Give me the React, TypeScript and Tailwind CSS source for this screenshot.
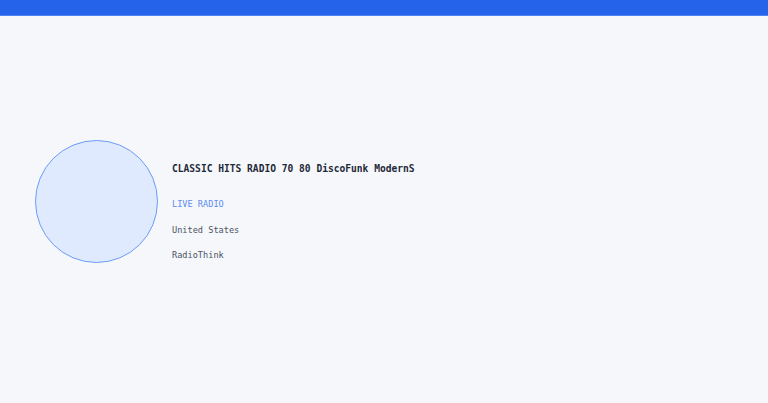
export default function App() {
  return (
    <div className="h-[403px] w-full bg-[#f5f7fb] overflow-hidden" style={{ fontFamily: '"DejaVu Sans Mono", monospace' }}>
      <div className="h-4 bg-[#2563eb] border-b border-[#4d82f0]" />
      <div className="flex gap-[14px] pl-[35px] pt-[124px]">
        <div className="w-[123px] h-[123px] rounded-full bg-[#e0eaff] border border-[#6b9cf7] shrink-0" />
        <div className="flex flex-col mt-[21px] leading-[16px]">
          <div className="text-[9.6px] font-semibold text-[#1f2937]">CLASSIC HITS RADIO 70 80 DiscoFunk ModernS</div>
          <div className="mt-[19px] text-[8.6px] text-[#5b8def]">LIVE RADIO</div>
          <div className="mt-[10px] text-[8.6px] text-[#4b5563]">United States</div>
          <div className="mt-[9px] text-[8.6px] text-[#4b5563]">RadioThink</div>
        </div>
      </div>
    </div>
  );
}
